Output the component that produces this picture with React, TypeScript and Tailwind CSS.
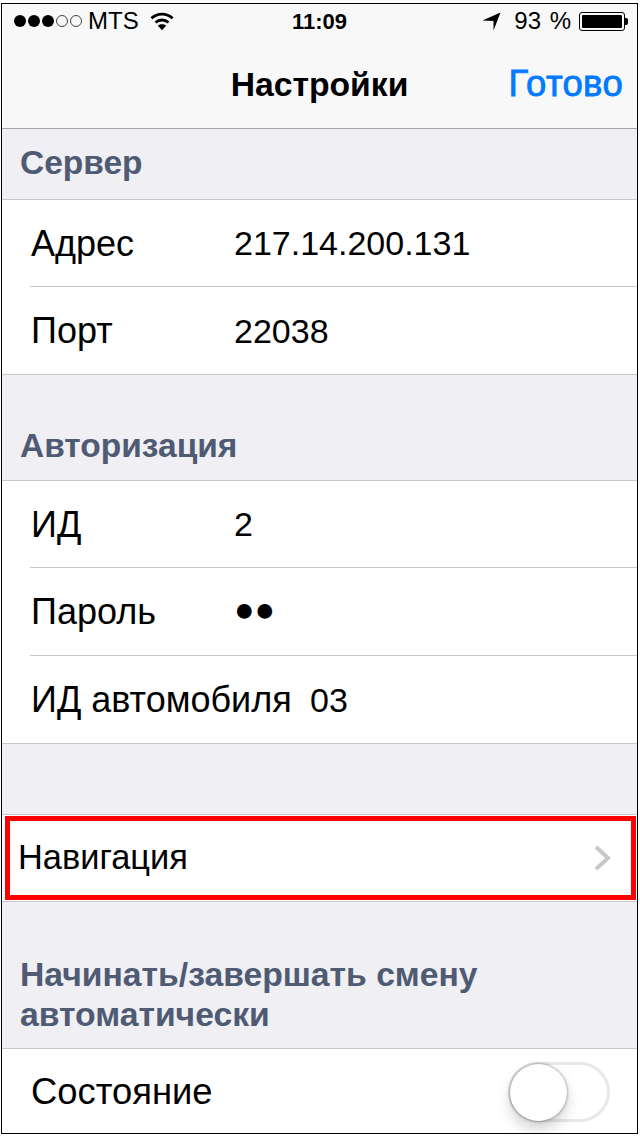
const FONT = "font-['Liberation_Sans',Arial,sans-serif]";

function SignalDots() {
  return (
    <div className="flex items-center gap-[2px]">
      <span className="h-[12px] w-[12px] rounded-full bg-black" />
      <span className="h-[12px] w-[12px] rounded-full bg-black" />
      <span className="h-[12px] w-[12px] rounded-full bg-black" />
      <span className="h-[12px] w-[12px] rounded-full border border-[#444]" />
      <span className="h-[12px] w-[12px] rounded-full border border-[#444]" />
    </div>
  );
}

function WifiIcon() {
  return (
    <svg width="24" height="19" viewBox="0 0 26 20" fill="none" stroke="black" strokeWidth="3">
      <path d="M1.5 6.5C8 .5 18 .5 24.5 6.5" />
      <path d="M6 11C10 7.5 16 7.5 20 11" />
      <path d="M13 19.5L8.5 14.5C11 12.5 15 12.5 17.5 14.5Z" fill="black" stroke="none" />
    </svg>
  );
}

function LocationIcon() {
  return (
    <svg width="19" height="19" viewBox="0 0 19 19">
      <path d="M0.5 8.5L18.5 0.5L11.5 18.5V9Z" fill="black" />
    </svg>
  );
}

function Battery() {
  return (
    <div className="flex items-center">
      <div className="flex h-[19px] w-[46px] rounded-[3px] border border-black p-[2px]">
        <div className="flex-1 rounded-[1px] bg-black" />
      </div>
      <div className="h-[7px] w-[3px] rounded-r-[2px] bg-black" />
    </div>
  );
}

function StatusBar() {
  return (
    <div className="relative flex h-[34px] items-center pl-[12px] text-[24px] text-black">
      <SignalDots />
      <span className="ml-[6px]">MTS</span>
      <div className="ml-[11px]">
        <WifiIcon />
      </div>
      <span className="absolute left-0 right-0 text-center text-[22px] font-bold">11:09</span>
      <div className="ml-auto flex items-center">
        <LocationIcon />
        <span className="ml-[13px] [word-spacing:2px]">93 %</span>
        <div className="ml-[8px] mr-[9px]">
          <Battery />
        </div>
      </div>
    </div>
  );
}

function NavBar() {
  return (
    <div className="relative border-b border-[#a7a7aa] bg-[#f8f8f8]">
      <StatusBar />
      <div className="flex h-[90px] items-center justify-end pt-[3px]">
        <span className="absolute left-0 right-0 text-center text-[33.7px] font-bold text-black">Настройки</span>
        <span className="relative mr-[14px] text-[36.5px] tracking-[0.3px] text-[#007aff] [-webkit-text-stroke:0.8px_#007aff]">Готово</span>
      </div>
    </div>
  );
}

function SectionHeader({ children, className }: { children: React.ReactNode; className: string }) {
  return (
    <div className={`flex items-end border-b border-[#c8c7cc] px-[18px] text-[33.5px] leading-[38px] font-bold text-[#4f5a73] ${className}`}>
      <span>{children}</span>
    </div>
  );
}

function Field({ label, value, last, height = "h-[87px]", labelWidth = 203, valueClass = "" }: { label: string; value: string; last?: boolean; height?: string; labelWidth?: number; valueClass?: string }) {
  return (
    <div className="pl-[28px]">
      <div className={`flex items-center pl-[1px] pt-[1px] text-black ${height} ${last ? "" : "border-b border-[#c8c7cc]"}`}>
        <span className="shrink-0 text-[36px]" style={{ width: labelWidth }}>{label}</span>
        <span className={`text-[34px] ${valueClass}`}>{value}</span>
      </div>
    </div>
  );
}

export default function App() {
  return (
    <div className={`h-[1136px] w-[640px] overflow-hidden bg-white pb-[2px] pl-[1px] pr-[2px] pt-[3px] ${FONT}`}>
      <div className="h-full overflow-hidden border border-black bg-[#efeff4]">
        <NavBar />

        <SectionHeader className="h-[71px] pb-[17px]">Сервер</SectionHeader>
        <div className="border-b border-[#c8c7cc] bg-white">
          <Field label="Адрес" value="217.14.200.131" />
          <Field label="Порт" value="22038" last />
        </div>

        <SectionHeader className="h-[106px] pb-[15px]">Авторизация</SectionHeader>
        <div className="border-b border-[#c8c7cc] bg-white">
          <Field label="ИД" value="2" />
          <Field label="Пароль" value="●●" height="h-[88px]" valueClass="mb-[5px]" />
          <Field label="ИД автомобиля" value="03" labelWidth={279} last />
        </div>

        <div className="h-[71px] border-b border-[#c8c7cc]" />

        <div className="relative flex h-[87px] items-center justify-between border-b border-[#c8c7cc] bg-white pl-[16px] pr-[25px] text-[34.4px] text-black">
          <span>Навигация</span>
          <svg width="18" height="26" viewBox="0 0 18 26" fill="none" stroke="#c7c7cc" strokeWidth="4">
            <path d="M2 2L14 13L2 24" />
          </svg>
          <div className="absolute bottom-[1px] left-[3px] right-[1px] top-[1px] border-[5px] border-[#ff0000]" />
        </div>

        <div className="h-[147px] border-b border-[#c8c7cc] px-[18px] pt-[52px] text-[33.7px] leading-[40px] font-bold text-[#4f5a73]">
          Начинать/завершать смену автоматически
        </div>

        <div className="flex h-[85px] items-center justify-between bg-white pl-[29px] pr-[27px] text-[36.4px] text-black">
          <span className="mt-[2px]">Состояние</span>
          <div className="relative h-[60px] w-[102px] rounded-full border-[3px] border-[#e8e8e8] bg-white">
            <div className="absolute -left-[1px] -top-[1px] h-[57px] w-[57px] rounded-full bg-white shadow-[0_8px_14px_rgba(0,0,0,0.18),0_0_3px_rgba(0,0,0,0.5)]" />
          </div>
        </div>
      </div>
    </div>
  );
}
